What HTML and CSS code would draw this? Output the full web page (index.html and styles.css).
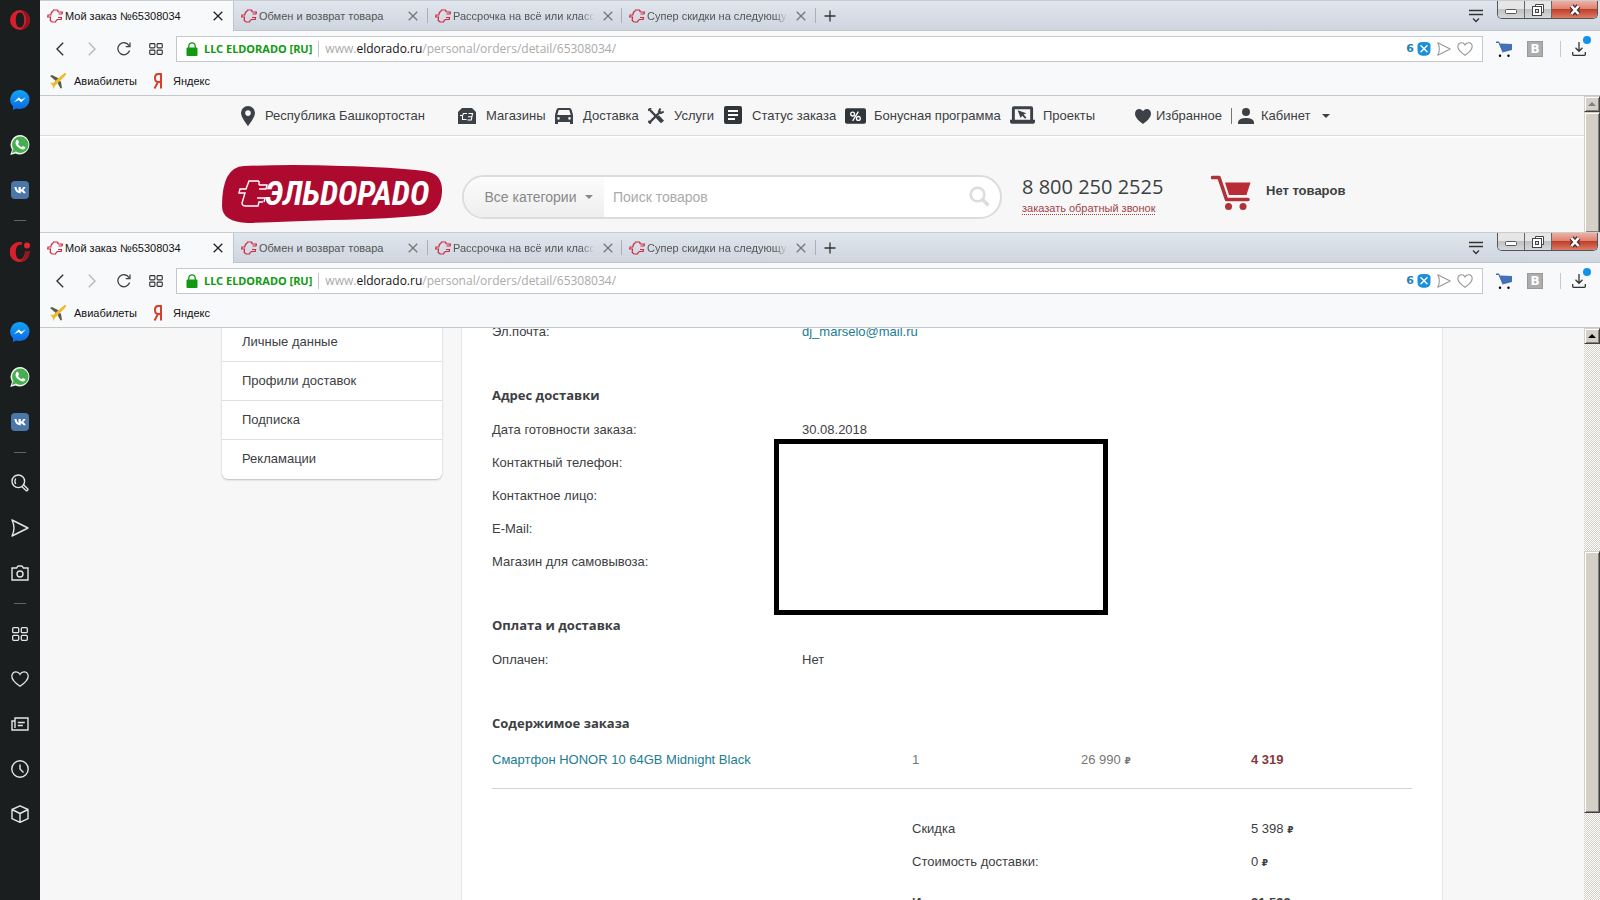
FILE: index.html
```html
<!DOCTYPE html>
<html lang="ru">
<head>
<meta charset="utf-8">
<title>Мой заказ №65308034</title>
<link rel="stylesheet" href="styles.css">
</head>
<body>
<svg class="sprite" aria-hidden="true">
  <symbol id="plug" viewBox="0 0 16 14"><path d="M11 1H6.500L5.500 3H4.500L3.800 6H1L.7 8H3.500L3.200 11.500L5 13H8.500L9.500 11H10.500M11 1L10.800 3M11 3H15.500L15 5H11.500M11 8.500H14.500L14.200 10.500H10" fill="none" stroke="#d0283c" stroke-width="1.200"/></symbol>
  <symbol id="close" viewBox="0 0 10 10"><path d="M.7.7l8.600 8.600M9.300.7L.7 9.300" fill="none" stroke="currentColor" stroke-width="1.300"/></symbol>
  <symbol id="plus" viewBox="0 0 12 12"><path d="M6 .5v11M.5 6h11" fill="none" stroke="#333" stroke-width="1.300"/></symbol>
  <symbol id="tabmenu" viewBox="0 0 14 14"><path d="M0 1.500h14M0 5.500h14M4 9.500l3 3 3-3" fill="none" stroke="#333" stroke-width="1.300"/></symbol>
  <symbol id="minimize" viewBox="0 0 14 14"><rect x="1.500" y="6.500" width="11" height="4" rx="1" fill="#fff" stroke="#555"/></symbol>
  <symbol id="restore" viewBox="0 0 14 14"><path d="M4.500 3.500v-2h8v8h-2" fill="#fff" stroke="#444"/><rect x="1.500" y="3.500" width="9" height="9" fill="#fff" stroke="#444"/><rect x="4.500" y="6.500" width="3" height="3" fill="#ddd" stroke="#444"/></symbol>
  <symbol id="winclose" viewBox="0 0 14 12"><path d="M3.500 2l7 8M10.500 2l-7 8" stroke="#4b2b2b" stroke-width="5"/><path d="M3.500 2l7 8M10.500 2l-7 8" stroke="#fff" stroke-width="2.600"/></symbol>
  <symbol id="back" viewBox="0 0 8 14"><path d="M7.200.8L1 7l6.200 6.200" fill="none" stroke="currentColor" stroke-width="1.400"/></symbol>
  <symbol id="forward" viewBox="0 0 8 14"><path d="M.8.8L7 7 .8 13.200" fill="none" stroke="currentColor" stroke-width="1.400"/></symbol>
  <symbol id="reload" viewBox="0 0 14 14"><path d="M12.600 8.500A6 6 0 1 1 12 3.600M13 .5V4.700H8.700" fill="none" stroke="#444" stroke-width="1.300"/></symbol>
  <symbol id="tiles" viewBox="0 0 16 14"><g fill="none" stroke="currentColor" stroke-width="1.300"><rect x=".7" y=".7" width="6" height="5" rx="1"/><rect x="9.300" y=".7" width="6" height="5" rx="1"/><rect x=".7" y="8.300" width="6" height="5" rx="1"/><rect x="9.300" y="8.300" width="6" height="5" rx="1"/></g></symbol>
  <symbol id="lock" viewBox="0 0 12 14"><path d="M2.800 6V4a3.200 3.200 0 0 1 6.400 0v2" fill="none" stroke="#119a11" stroke-width="1.300"/><rect x=".5" y="5.500" width="11" height="8.500" rx="1" fill="#119a11"/></symbol>
  <symbol id="shield" viewBox="0 0 14 14"><path d="M3 .3Q7-.3 11 .3 13.500 1 13.500 3.500V8q0 4-3 5.200Q7 14.500 3.500 13.200 .5 12 .5 8V3.500Q.5 1 3 .3z" fill="#1b8fdc"/><path d="M3.500 3.200l7 7M10.500 3.200l-7 7" stroke="#fff" stroke-width="1.400"/></symbol>
  <symbol id="send" viewBox="0 0 18 18"><path d="M1 1l16 8L1 17Q5 9 1 1z" fill="none" stroke="currentColor" stroke-width="1.400" stroke-linejoin="round"/></symbol>
  <symbol id="heart" viewBox="0 0 18 16"><path d="M9 15.200C5 12.500.8 9 .8 5.200.8 2.500 2.800.8 5 .8 7 .8 8.300 2 9 3.300 9.700 2 11 .8 13 .8c2.200 0 4.200 1.700 4.200 4.400C17.200 9 13 12.500 9 15.200z" fill="none" stroke="currentColor" stroke-width="1.300"/></symbol>
  <symbol id="bluecart" viewBox="0 0 16 16"><path d="M0 .5h3l1 2 12 .5v6L6.500 11.500 2.500 2H0z" fill="#4470b5"/><circle cx="4" cy="14.800" r="1.200"/><circle cx="12.500" cy="14.800" r="1.200"/></symbol>
  <symbol id="download" viewBox="0 0 14 14"><path d="M7 0v9M3.500 5.800L7 9.300l3.500-3.500M.7 10v2.500q0 .8.8.8h11q.8 0 .8-.8V10" fill="none" stroke="#333" stroke-width="1.300"/></symbol>
  <symbol id="plane" viewBox="0 0 16 16"><path d="M0 3l2-1 6 3 3 4 1 6-1.500.5L7 9z" fill="#596047"/><path d="M16 0q-1-.6-3 1.300L3 10l-3-.5 2.500 3L3.500 16l1.300-3L14.500 3.500Q16.300 1.500 16 0z" fill="#efba2f"/></symbol>
  <symbol id="yandex" viewBox="0 0 10 16"><path d="M8 15.500V.9H5.500Q2 1 2 5t3 4h3M5 9L1.500 15.500" fill="none" stroke="#d6402b" stroke-width="2"/></symbol>
  <symbol id="opera" viewBox="0 0 20 20"><path fill-rule="evenodd" d="M10 0a10 10 0 1 0 0 20 10 10 0 0 0 0-20zm0 2.500c2.700 0 4.200 3 4.200 7.500s-1.500 7.500-4.200 7.500S5.800 14.500 5.800 10 7.300 2.500 10 2.500z" fill="#d7202c"/><path d="M10 0a10 10 0 0 1 0 20q6-3 6-10t-6-10z" fill="#8e1620"/></symbol>
  <symbol id="operadot" viewBox="0 0 20 20"><path d="M12 .3A10 10 0 1 0 19.500 9H15q-.5 8-5 8.500c-2.700 0-4.200-3-4.200-7.500S7.300 2.500 12 2.500z" fill="#d7202c"/><path d="M19.600 9Q19 18 10 20q5-3 5.200-11z" fill="#8e1620"/><circle cx="17" cy="3.500" r="3" fill="#e8232f"/></symbol>
  <linearGradient id="blue" x2="0" y2="1"><stop stop-color="#12a5f5"/><stop offset="1" stop-color="#0c67e4"/></linearGradient>
  <symbol id="messenger" viewBox="0 0 20 20"><path d="M10 0A9.700 9.700 0 0 0 3 16.500V20l3.300-1.500Q8 19 10 19A9.500 9.500 0 0 0 10 0z" fill="url(#blue)"/><path d="M4 12.300L8.800 7.200l2.500 2.500L16 7.300 11.200 12.300 8.700 9.900z" fill="#fff"/></symbol>
  <symbol id="whatsapp" viewBox="0 0 20 20"><path d="M10.300 0A9.700 9.700 0 0 0 2 14.700L.3 20l5.300-1.500A9.700 9.700 0 1 0 10.300 0z" fill="#eef5ee"/><circle cx="10.300" cy="9.700" r="8.200" fill="#46ad50"/><path d="M3 14l-1 4 4-1.300z" fill="#46ad50"/><path d="M6 5.500Q7.500 4 8.200 5.500L9 7.500 8 9q1 2 3.500 3.200l1.300-1.300 2.300 1.200q.8.700-.6 2-1.500 1.200-4.500-.5Q4 10 6 5.500z" fill="#fff"/></symbol>
  <symbol id="vk" viewBox="0 0 18 18"><rect width="18" height="18" rx="4" fill="#4a76a8"/><path d="M3.300 6h2q1 3.500 2.200 4V6h2.300v2.800Q11 8.500 12.300 6h2.200q-.8 2-2.300 3 1.800 1.200 2.700 3.200h-2.400Q11.500 10.700 9.800 10.200v2H9Q4.500 12.200 3.300 6z" fill="#fff"/></symbol>
  <symbol id="find" viewBox="0 0 18 18"><g fill="none" stroke="currentColor" stroke-width="1.400"><circle cx="7.300" cy="7.300" r="6.300"/><path d="M4.700 4.500Q3.200 7.500 4.700 10M11 12.800l4 3.700q1 .5 1.600-.2.700-.8 0-1.500L12.800 11"/></g></symbol>
  <symbol id="camera" viewBox="0 0 18 16"><g fill="none" stroke="currentColor" stroke-width="1.400"><path d="M1 3h4.700Q6.500 1 7.500 1h3Q11.500 1 12.300 3H17v12H1z"/><circle cx="9" cy="9" r="3"/></g></symbol>
  <symbol id="news" viewBox="0 0 18 14"><g fill="none" stroke="currentColor" stroke-width="1.400"><path d="M4 11V1h13v12H1V4h3M6.800 5.500h7M6.800 8.500h5"/></g></symbol>
  <symbol id="clock" viewBox="0 0 18 18"><circle cx="9" cy="9" r="8.200" fill="none" stroke="currentColor" stroke-width="1.400"/><path d="M9 4.500V9l3.500 3.500" fill="none" stroke="currentColor" stroke-width="1.400"/></symbol>
  <symbol id="cube" viewBox="0 0 18 18"><path d="M9 .8l8 3.700v9.200l-8 3.600-8-3.600V4.500zM1 4.500L9 8.500l8-4M9 8.500v9" fill="none" stroke="currentColor" stroke-width="1.400" stroke-linejoin="round"/></symbol>
  <symbol id="pin" viewBox="0 0 14 20"><path fill-rule="evenodd" d="M7 0a7 7 0 0 0-7 7c0 4.500 7 13 7 13s7-8.500 7-13a7 7 0 0 0-7-7zm0 4.300a2.800 2.800 0 1 1 0 5.600 2.800 2.800 0 0 1 0-5.600z" fill="#3c4147"/></symbol>
  <symbol id="shop" viewBox="0 0 18 16"><path d="M4 0h10l4 4v12H0V4z" fill="#3c4147"/><path d="M9 5.500H5.500L4.500 7.500H2M4.500 7.500v4h4M10.500 5.500h4l-1.200 6.500H9.500M10 8.800h3.500" fill="none" stroke="#fff" stroke-width="1.100"/></symbol>
  <symbol id="car" viewBox="0 0 18 16"><path fill-rule="evenodd" d="M3 0h12l1.500 1.500L18 7v9h-3v-2H3v2H0V7l1.500-5.500zM3.700 2L2.300 7h13.400l-1.400-5zM3.500 9a1.400 1.400 0 1 0 .01 0zM14.500 9a1.400 1.400 0 1 0 .01 0z" fill="#3c4147"/></symbol>
  <symbol id="tools" viewBox="0 0 16 16"><path d="M2 2l11 11.500" stroke="#3c4147" stroke-width="2.400"/><path d="M9.500 8.500l5 5.500" stroke="#3c4147" stroke-width="4"/><path d="M1.500 14.500l11-11" stroke="#3c4147" stroke-width="2.400"/><path d="M12.500.5L11 3l2 2 2.700-1.500M.3 13l2.500 2.700M0 2.500L3 0" fill="none" stroke="#3c4147" stroke-width="2"/></symbol>
  <symbol id="status" viewBox="0 0 18 18"><rect width="18" height="18" rx="2" fill="#30353a"/><path d="M4 5h10M4 9h10M4 13h7" stroke="#fff" stroke-width="1.800"/></symbol>
  <symbol id="percent" viewBox="0 0 22 16"><rect width="22" height="16" rx="2" fill="#30353a"/><g fill="none" stroke="#fff" stroke-width="1.400"><circle cx="8" cy="6" r="2"/><circle cx="14" cy="10.500" r="2"/><path d="M14 3.500l-6 9.500"/></g></symbol>
  <symbol id="laptop" viewBox="0 0 26 18"><path fill-rule="evenodd" d="M4 0h18q2 0 2 2v12h2v2q0 2-2 2H2q-2 0-2-2v-2h2V2q0-2 2-2zM5 3v11h16V3z" fill="#3c4147"/><path d="M8 4l9 3.300-2.800 1.200 3 3.300-1.500 1.200-3-3.300L11 12z" fill="#3c4147"/></symbol>
  <symbol id="heartfill" viewBox="0 0 16 15"><path d="M8 15C4 12 0 8.500 0 4.500 0 2 2 0 4.200 0 6 0 7.300 1 8 2.300 8.700 1 10 0 11.800 0 14 0 16 2 16 4.500 16 8.500 12 12 8 15z" fill="#3c4147"/></symbol>
  <symbol id="person" viewBox="0 0 16 16"><circle cx="8" cy="4" r="4" fill="#3c4147"/><path d="M0 16v-2q1-4 8-4t8 4v2z" fill="#3c4147"/></symbol>
  <symbol id="glass" viewBox="0 0 22 22"><circle cx="8.500" cy="8.500" r="6.800" fill="none" stroke="#dcdcdc" stroke-width="2.600"/><path d="M13 13l6.500 6.500" stroke="#dcdcdc" stroke-width="3.600"/></symbol>
  <symbol id="redcart" viewBox="0 0 40 36"><path d="M1.500 2.500H8L15.500 24.500H37" fill="none" stroke="#b03138" stroke-width="3.600" stroke-linecap="round" stroke-linejoin="round"/><path d="M14 7.500h25.500l-4 12.500H18z" fill="#b92b35"/><circle cx="17.500" cy="31.500" r="3.500" fill="#b03138"/><circle cx="32" cy="31.500" r="3.500" fill="#b03138"/></symbol>
</svg>

<div class="window window-top">
  <nav class="rail" aria-label="Боковая панель">
    <a class="rail-brand" href="#"><svg width="20" height="20"><use href="#opera"/></svg></a>
    <a href="#"><svg width="20" height="20"><use href="#messenger"/></svg></a>
    <a href="#"><svg width="20" height="20"><use href="#whatsapp"/></svg></a>
    <a href="#"><svg width="18" height="18"><use href="#vk"/></svg></a>
    <hr>
  </nav>
  <div class="browser">
    <div class="tabs">
      <div class="tab active"><svg width="16" height="14"><use href="#plug"/></svg><span>Мой заказ №65308034</span><button aria-label="Закрыть"><svg width="10" height="10"><use href="#close"/></svg></button></div>
      <div class="tab"><svg width="16" height="14"><use href="#plug"/></svg><span>Обмен и возврат товара</span><button aria-label="Закрыть"><svg width="10" height="10"><use href="#close"/></svg></button></div>
      <div class="tab"><svg width="16" height="14"><use href="#plug"/></svg><span class="faded">Рассрочка на всё или класс</span><button aria-label="Закрыть"><svg width="10" height="10"><use href="#close"/></svg></button></div>
      <div class="tab"><svg width="16" height="14"><use href="#plug"/></svg><span class="faded">Супер скидки на следующу</span><button aria-label="Закрыть"><svg width="10" height="10"><use href="#close"/></svg></button></div>
      <button class="newtab" aria-label="Новая вкладка"><svg width="12" height="12"><use href="#plus"/></svg></button>
      <button class="tabmenu" aria-label="Меню вкладок"><svg width="14" height="14"><use href="#tabmenu"/></svg></button>
      <div class="controls"><button aria-label="Свернуть"><svg width="14" height="14"><use href="#minimize"/></svg></button><button aria-label="Восстановить"><svg width="14" height="14"><use href="#restore"/></svg></button><button class="shut" aria-label="Закрыть окно"><svg width="14" height="12"><use href="#winclose"/></svg></button></div>
    </div>
    <div class="toolbar">
      <div class="history">
        <button aria-label="Назад"><svg width="8" height="14"><use href="#back"/></svg></button>
        <button class="off" aria-label="Вперёд"><svg width="8" height="14"><use href="#forward"/></svg></button>
        <button aria-label="Обновить"><svg width="14" height="14"><use href="#reload"/></svg></button>
        <button aria-label="Экспресс-панель"><svg width="14" height="12"><use href="#tiles"/></svg></button>
      </div>
      <div class="address">
        <svg width="12" height="14"><use href="#lock"/></svg><b>LLC ELDORADO [RU]</b>
        <span class="url">www.<em>eldorado.ru</em>/personal/orders/detail/65308034/</span>
        <span class="blocked">6</span><svg width="14" height="14"><use href="#shield"/></svg><svg width="14" height="14"><use href="#send"/></svg><svg width="16" height="14"><use href="#heart"/></svg>
      </div>
      <div class="extras">
        <button aria-label="Корзина"><svg width="16" height="16"><use href="#bluecart"/></svg></button>
        <button class="ext-b">B</button>
        <button class="download" aria-label="Загрузки"><svg width="14" height="14"><use href="#download"/></svg></button>
      </div>
    </div>
    <div class="bookmarks"><a href="#"><svg width="16" height="16"><use href="#plane"/></svg>Авиабилеты</a><a href="#"><svg width="10" height="16"><use href="#yandex"/></svg>Яндекс</a></div>
    <div class="view">
      <div class="page">
        <nav class="topnav">
          <a href="#"><svg width="14" height="20"><use href="#pin"/></svg>Республика Башкортостан</a>
          <a href="#"><svg width="18" height="16"><use href="#shop"/></svg>Магазины</a>
          <a href="#"><svg width="18" height="16"><use href="#car"/></svg>Доставка</a>
          <a href="#"><svg width="16" height="16"><use href="#tools"/></svg>Услуги</a>
          <a href="#"><svg class="raised" width="18" height="18"><use href="#status"/></svg>Статус заказа</a>
          <a href="#"><svg width="21" height="16"><use href="#percent"/></svg>Бонусная программа</a>
          <a href="#"><svg class="raised" width="25" height="18"><use href="#laptop"/></svg>Проекты</a>
          <a href="#"><svg width="16" height="15"><use href="#heartfill"/></svg>Избранное</a>
          <a class="cabinet" href="#"><svg width="16" height="16"><use href="#person"/></svg>Кабинет<i class="caret"></i></a>
        </nav>
        <header class="shop-head">
          <a class="logo" href="#" aria-label="Эльдорадо">
            <svg width="221" height="60" viewBox="0 0 221 60"><path d="M22 1Q70-1 120 1 170 2 202 6 221 8 220 27 219 46 203 50 170 54 110 55 60 57 26 58 0 57 0 41 0 2 22 1z" fill="#ae0a30"/><path d="M37 16H27L24 24H18L17 28H23L20 38Q20 41 24 41H36L37 37H41M37 16L37 20M37 20H45L44 24H37M35 33H43L42 37" fill="none" stroke="#fff" stroke-width="1.400"/><text class="logo-text" x="43" y="40">ЭЛЬDОРАDО</text></svg>
          </a>
          <form class="search">
            <button type="button" class="category">Все категории<i class="caret"></i></button>
            <input type="search" aria-label="Поиск товаров" placeholder="Поиск товаров">
            <button type="button" class="go" aria-label="Найти"><svg width="22" height="22"><use href="#glass"/></svg></button>
          </form>
          <div class="phone"><strong>8 800 250 2525</strong><a href="#">заказать обратный звонок</a></div>
          <a class="cart" href="#"><svg width="40" height="36"><use href="#redcart"/></svg><span>Нет товаров</span></a>
        </header>
      </div>
      <div class="scroll idle"><button aria-label="Вверх"></button><div class="thumb"></div></div>
    </div>
  </div>
</div>

<div class="window window-bottom">
  <nav class="rail" aria-label="Боковая панель">
    <a class="rail-brand" href="#"><svg width="20" height="20"><use href="#operadot"/></svg></a>
    <a href="#"><svg width="20" height="20"><use href="#messenger"/></svg></a>
    <a href="#"><svg width="20" height="20"><use href="#whatsapp"/></svg></a>
    <a href="#"><svg width="18" height="18"><use href="#vk"/></svg></a>
    <hr>
    <a href="#"><svg width="18" height="18"><use href="#find"/></svg></a>
    <a href="#"><svg width="18" height="18"><use href="#send"/></svg></a>
    <a href="#"><svg width="18" height="16"><use href="#camera"/></svg></a>
    <hr>
    <a href="#"><svg width="16" height="14"><use href="#tiles"/></svg></a>
    <a href="#"><svg width="18" height="16"><use href="#heart"/></svg></a>
    <a href="#"><svg width="18" height="14"><use href="#news"/></svg></a>
    <a href="#"><svg width="18" height="18"><use href="#clock"/></svg></a>
    <a href="#"><svg width="18" height="18"><use href="#cube"/></svg></a>
  </nav>
  <div class="browser">
    <div class="tabs">
      <div class="tab active"><svg width="16" height="14"><use href="#plug"/></svg><span>Мой заказ №65308034</span><button aria-label="Закрыть"><svg width="10" height="10"><use href="#close"/></svg></button></div>
      <div class="tab"><svg width="16" height="14"><use href="#plug"/></svg><span>Обмен и возврат товара</span><button aria-label="Закрыть"><svg width="10" height="10"><use href="#close"/></svg></button></div>
      <div class="tab"><svg width="16" height="14"><use href="#plug"/></svg><span class="faded">Рассрочка на всё или класс</span><button aria-label="Закрыть"><svg width="10" height="10"><use href="#close"/></svg></button></div>
      <div class="tab"><svg width="16" height="14"><use href="#plug"/></svg><span class="faded">Супер скидки на следующу</span><button aria-label="Закрыть"><svg width="10" height="10"><use href="#close"/></svg></button></div>
      <button class="newtab" aria-label="Новая вкладка"><svg width="12" height="12"><use href="#plus"/></svg></button>
      <button class="tabmenu" aria-label="Меню вкладок"><svg width="14" height="14"><use href="#tabmenu"/></svg></button>
      <div class="controls"><button aria-label="Свернуть"><svg width="14" height="14"><use href="#minimize"/></svg></button><button aria-label="Восстановить"><svg width="14" height="14"><use href="#restore"/></svg></button><button class="shut" aria-label="Закрыть окно"><svg width="14" height="12"><use href="#winclose"/></svg></button></div>
    </div>
    <div class="toolbar">
      <div class="history">
        <button aria-label="Назад"><svg width="8" height="14"><use href="#back"/></svg></button>
        <button class="off" aria-label="Вперёд"><svg width="8" height="14"><use href="#forward"/></svg></button>
        <button aria-label="Обновить"><svg width="14" height="14"><use href="#reload"/></svg></button>
        <button aria-label="Экспресс-панель"><svg width="14" height="12"><use href="#tiles"/></svg></button>
      </div>
      <div class="address">
        <svg width="12" height="14"><use href="#lock"/></svg><b>LLC ELDORADO [RU]</b>
        <span class="url">www.<em>eldorado.ru</em>/personal/orders/detail/65308034/</span>
        <span class="blocked">6</span><svg width="14" height="14"><use href="#shield"/></svg><svg width="14" height="14"><use href="#send"/></svg><svg width="16" height="14"><use href="#heart"/></svg>
      </div>
      <div class="extras">
        <button aria-label="Корзина"><svg width="16" height="16"><use href="#bluecart"/></svg></button>
        <button class="ext-b">B</button>
        <button class="download" aria-label="Загрузки"><svg width="14" height="14"><use href="#download"/></svg></button>
      </div>
    </div>
    <div class="bookmarks"><a href="#"><svg width="16" height="16"><use href="#plane"/></svg>Авиабилеты</a><a href="#"><svg width="10" height="16"><use href="#yandex"/></svg>Яндекс</a></div>
    <div class="view">
      <div class="page account">
        <nav class="menu">
          <a href="#">Личные данные</a><a href="#">Профили доставок</a><a href="#">Подписка</a><a href="#">Рекламации</a>
        </nav>
        <main class="order">
          <dl><dt>Эл.почта:</dt><dd><a href="#">dj_marselo@mail.ru</a></dd></dl>
          <h2>Адрес доставки</h2>
          <dl>
            <dt>Дата готовности заказа:</dt><dd>30.08.2018</dd>
            <dt>Контактный телефон:</dt><dd></dd>
            <dt>Контактное лицо:</dt><dd></dd>
            <dt>E-Mail:</dt><dd></dd>
            <dt>Магазин для самовывоза:</dt><dd></dd>
          </dl>
          <div class="cover"></div>
          <h2>Оплата и доставка</h2>
          <dl><dt>Оплачен:</dt><dd>Нет</dd></dl>
          <h2>Содержимое заказа</h2>
          <table>
            <colgroup><col class="c-name"><col class="c-qty"><col class="c-price"><col></colgroup>
            <tbody class="goods"><tr><td><a href="#">Смартфон HONOR 10 64GB Midnight Black</a></td><td>1</td><td>26 990 <small>₽</small></td><td class="sum">4 319</td></tr></tbody>
            <tbody class="totals">
              <tr><td></td><td colspan="2">Скидка</td><td>5 398 <small>₽</small></td></tr>
              <tr><td></td><td colspan="2">Стоимость доставки:</td><td>0 <small>₽</small></td></tr>
              <tr class="grand"><td></td><td colspan="2">Итого:</td><td>21 592 <small>₽</small></td></tr>
            </tbody>
          </table>
        </main>
      </div>
      <div class="scroll"><button aria-label="Вверх"></button><div class="thumb"></div></div>
    </div>
  </div>
</div>
</body>
</html>
```
FILE: styles.css
```css
* { box-sizing: border-box; }
body {
  margin: 0;
  height: 100vh;
  display: flex;
  flex-direction: column;
  overflow: hidden;
  font: 13px/16px "Liberation Sans", Arial, sans-serif;
  color: #3c4043;
}
a { color: inherit; text-decoration: none; }
button { border: 0; padding: 0; background: none; font: inherit; color: inherit; display: flex; align-items: center; justify-content: center; }
svg { display: block; flex: none; }
.sprite { position: absolute; width: 0; height: 0; }

.window { display: flex; overflow: hidden; }
.window-top { flex: 0 0 232px; }
.window-bottom { flex: 1; min-height: 0; }

.rail { flex: 0 0 40px; background: #1b1e1f; color: #e4e6e6; display: flex; flex-direction: column; align-items: center; }
.rail a { height: 45px; display: flex; align-items: center; }
.rail .rail-brand { height: 40px; margin-bottom: 37px; }
.rail a, .rail hr { flex-shrink: 0; }
.rail hr { width: 12px; height: 1px; border: 0; margin: 8px 0 7px; background: #606465; }

.browser { flex: 1; min-width: 0; display: flex; flex-direction: column; background: #f8f9fb; }

.tabs { flex: 0 0 31px; display: flex; background: linear-gradient(#dfe6ee, #cfd5de); border-top: 1px solid #c9cdd2; border-bottom: 1px solid #c0c5ca; font: 11px/16px "Liberation Sans", Arial, sans-serif; color: #555; }
.tab { flex: 0 1 194px; min-width: 0; display: flex; align-items: center; padding: 0 10px 0 7px; position: relative; }
.tab + .tab::after { content: ""; position: absolute; right: 0; top: 7px; height: 15px; width: 1px; background: #aab0b7; }
.tab span { flex: 1; margin: 0 8px 0 2px; white-space: nowrap; }
.tab .faded { -webkit-mask-image: linear-gradient(90deg, #000 90%, transparent); mask-image: linear-gradient(90deg, #000 90%, transparent); }
.tab button { color: #777; }
.tab.active { background: #f8f9fb; color: #111; border-right: 1px solid #bfc4c9; margin-bottom: -1px; }
.tab.active button { color: #222; }
.newtab { width: 28px; }
.tabmenu { margin-left: auto; margin-right: 14px; }
.controls { display: flex; height: 18px; margin-right: 2px; border: 1px solid #555; border-top: 0; border-radius: 0 0 5px 5px; overflow: hidden; }
.controls button { width: 27px; background: linear-gradient(#e6e6e6 0 45%, #bfc1c3 50%, #d5d7d9); border-right: 1px solid #666; }
.controls .shut { width: 45px; border: 0; background: linear-gradient(#eeb0a4, #dd8271 45%, #bf3f29 50%, #dc7c68); }

.toolbar { flex: 0 0 36px; display: flex; align-items: center; }
.history { flex: 0 0 136px; display: flex; padding-left: 4px; color: #333; }
.history button { width: 32px; }
.history .off { color: #b5b8bb; }
.address { flex: 1; min-width: 0; height: 26px; display: flex; align-items: center; gap: 6px; padding: 0 9px; background: #fff; border: 1px solid #c5c8cb; color: #999; }
.address b { color: #119a11; font: bold 11px/16px "Noto Sans", sans-serif; padding-right: 6px; border-right: 1px solid #c5c8cb; white-space: nowrap; }
.url { flex: 1; font: 12px/16px "Open Sans", sans-serif; color: #aaa; white-space: nowrap; overflow: hidden; }
.url em { font-style: normal; color: #111; }
.blocked { color: #2482b4; font: bold 11px/16px "DejaVu Sans", sans-serif; margin-right: -3px; }
.extras { flex: 0 0 117px; display: flex; align-items: center; padding-left: 13px; gap: 15px; }
.extras .ext-b { width: 16px; height: 16px; border: 1px solid #999; background: #adadad; color: #fff; font: bold 12px/14px "DejaVu Sans", sans-serif; }
.download { height: 16px; padding-left: 11px; border-left: 1px solid #c5c8cb; position: relative; margin-left: 2px; }
.download::after { content: ""; position: absolute; right: -5px; top: -5px; width: 8px; height: 8px; border-radius: 50%; background: #1392ea; }
.bookmarks { flex: 0 0 29px; display: flex; gap: 16px; align-items: center; padding-left: 10px; border-bottom: 1px solid #c5c8cb; color: #111; font: 11px/16px "Liberation Sans", Arial, sans-serif; }
.bookmarks a { display: flex; align-items: center; gap: 8px; }
.bookmarks a + a { gap: 10px; }

.view { flex: 1; min-height: 0; display: flex; background: #f7f7f7; }
.page { flex: 1; min-width: 0; overflow: hidden; }

.topnav { height: 42px; padding-left: 201px; border-bottom: 2px solid #fff; box-shadow: inset 0 -1px #dcdcdc; display: grid; grid-template-columns: 217px 97px 93px 76px 121px 165px 125px 96px 1fr; align-items: center; white-space: nowrap; }
.topnav a { display: flex; align-items: center; gap: 10px; }
.topnav a:nth-child(6), .topnav a:nth-child(7) { gap: 8px; }
.topnav a:nth-child(8) { gap: 5px; }
.topnav .raised { margin-bottom: 3px; }
.topnav .cabinet { height: 16px; padding-left: 6px; border-left: 1px solid #777; gap: 7px; }
.caret { border: 4px solid transparent; border-top-color: currentColor; border-bottom: 0; }
.cabinet .caret { margin-left: 5px; }

.shop-head { display: flex; padding: 27px 0 0 182px; }
.logo { width: 240px; }
.logo-text { font: italic 700 33px "Roboto Condensed", "Liberation Sans Narrow", Roboto, sans-serif; fill: #fff; }
.search { width: 540px; height: 44px; margin-top: 10px; display: flex; border: 2px solid #dcdcdc; border-radius: 22px; background: #fff; overflow: hidden; font-size: 14px; }
.category { width: 140px; gap: 9px; padding-left: 10px; color: #888; background: linear-gradient(#fcfcfc, #eee); }
.search input { flex: 1; min-width: 0; border: 0; outline: 0; padding: 0 9px; font: inherit; background: none; }
.search input::placeholder { color: #aaa; }
.go { width: 40px; }
.phone { width: 209px; padding: 10px 0 0 20px; }
.phone strong { display: block; font: 20px/24px "Open Sans", sans-serif; }
.phone a { font-size: 11px; line-height: 18px; color: #a0434a; border-bottom: 1px dotted #a0434a; }
.cart { display: flex; height: 36px; margin-top: 10px; gap: 15px; align-items: center; font-weight: bold; }
.cart span { padding-bottom: 4px; }

.account { display: flex; align-items: flex-start; gap: 19px; padding: 0 141px 0 182px; }
.menu { flex: 0 0 220px; margin-top: -5px; background: #fff; border-radius: 0 0 6px 6px; box-shadow: 0 1px 2px #bbb; }
.menu a { display: block; height: 39px; line-height: 37px; padding-left: 20px; border-bottom: 1px solid #e0e0e0; }
.menu a:last-child { border: 0; }
.order { flex: 1; min-width: 0; position: relative; margin-top: -13px; padding: 0 30px; background: #fff; border: solid #e6e6e6; border-width: 0 1px; min-height: 600px; }
.order a { color: #237c91; }
dl { margin: 0; display: grid; grid-template-columns: 310px 1fr; line-height: 33px; grid-auto-rows: 33px; }
dd { margin: 0; }
h2 { margin: 0; height: 65px; padding-top: 31px; font: bold 13px/33px "Open Sans", sans-serif; }
.cover { position: absolute; left: 312px; top: 124px; width: 334px; height: 176px; background: #fff; border: 5px solid #000; }
table { width: 100%; border-collapse: collapse; table-layout: fixed; line-height: 33px; }
td { padding: 0; white-space: nowrap; }
.c-name { width: 420px; }
.c-qty { width: 169px; }
.c-price { width: 170px; }
.goods td { padding: 2px 0 12px; border-bottom: 1px solid #d4d4d4; color: #777; }
.goods .sum { color: #84393d; font-weight: bold; }
.totals tr:first-child td { padding-top: 23px; }
.grand td { padding-top: 8px; font-weight: bold; }
td small { font: bold 9px "DejaVu Sans", sans-serif; }

.scroll { flex: 0 0 16px; display: flex; flex-direction: column; background: repeating-conic-gradient(#d4d0c8 0 25%, #fff 0 50%) 0 0 / 2px 2px; }
.scroll button, .thumb { background: #d4d0c8; border: 1px solid; border-color: #d4d0c8 #404040 #404040 #d4d0c8; box-shadow: inset 1px 1px #fff, inset -1px -1px #808080; }
.scroll button { flex: 0 0 16px; }
.scroll button::after { content: ""; border: 4px solid transparent; border-bottom-color: #000; border-top: 0; }
.thumb { flex: 0 0 262px; margin-top: 207px; }
.idle button::after { border-bottom-color: #808080; }
.idle .thumb { margin: 0; flex: 1; border-bottom: 0; }
```
